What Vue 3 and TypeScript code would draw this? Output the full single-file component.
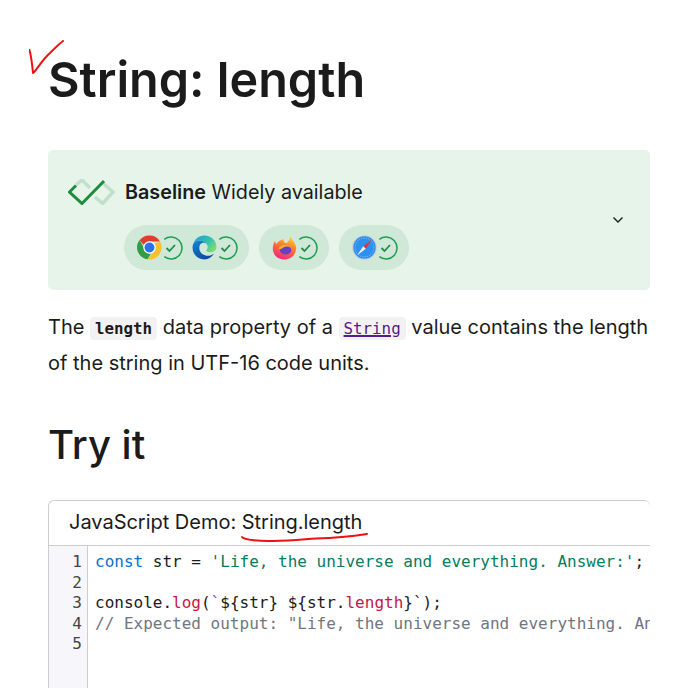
<script setup lang="ts">
const lines = [1, 2, 3, 4, 5]
</script>

<template>
  <main class="page">
    <svg class="mark-check" width="40" height="40" viewBox="0 0 40 40" aria-hidden="true">
      <path d="M0.500 10C1.500 14 3 22 4 33C8 30 12 21 21 13C26 8 30 4 34 1" fill="none" stroke="#ee1111" stroke-width="2" stroke-linecap="round" stroke-linejoin="round" />
    </svg>
    <h1 class="title">String: length</h1>

    <section class="baseline">
      <div class="baseline-main">
        <div class="baseline-head">
          <svg class="logo" width="47" height="26" viewBox="0 0 47 26" aria-hidden="true">
            <path d="M8 6L14 1L22 9" fill="none" stroke="#c2dfcc" stroke-width="3.500" />
            <path d="M34.700 4L45 13L34.700 24.500L27 18" fill="none" stroke="#c2dfcc" stroke-width="3.500" />
            <path d="M8 6.500L1.500 13L14 24.500L36 2" fill="none" stroke="#1e8b3f" stroke-width="3" />
          </svg>
          <span class="baseline-text"><strong>Baseline</strong> Widely available</span>
        </div>
        <div class="pills">
          <div class="pill">
            <svg class="browser" width="25" height="25" viewBox="0 0 48 48" aria-hidden="true">
              <path d="M24 1A23 23 0 0 1 44 12.500H24A11.500 11.500 0 0 0 13.500 19.500L5 10A23 23 0 0 1 24 1Z" fill="#e33b2e" />
              <path d="M5 9.500L14.500 27A11 11 0 0 0 27 35L20.500 46.500A23 23 0 0 1 5 9.500Z" fill="#2f9e44" />
              <path d="M44.500 13A23 23 0 0 1 20 46.500L30.500 33A11 11 0 0 0 33 16.500L44.500 13Z" fill="#fbc02d" />
              <circle cx="24" cy="24" r="12" fill="#fff" />
              <circle cx="24" cy="24" r="9.500" fill="#2b73e8" />
            </svg>
            <svg class="yes" width="24" height="24" viewBox="0 0 24 24" aria-hidden="true">
              <path d="M5.300 3.300A11 11 0 1 1 5.300 20.700" fill="none" stroke="#1f9d50" stroke-width="1.500" />
              <path d="M7.500 12L10.500 15L16 9" fill="none" stroke="#1f8f4a" stroke-width="1.800" />
            </svg>
            <svg class="browser second" width="25" height="25" viewBox="0 0 48 48" aria-hidden="true">
              <defs>
                <linearGradient id="edgeTop" x1="0" y1="0" x2="1" y2="0.700">
                  <stop offset="0" stop-color="#1b9fd8" />
                  <stop offset="0.600" stop-color="#35c1b0" />
                  <stop offset="1" stop-color="#7fdc6e" />
                </linearGradient>
                <linearGradient id="edgeLow" x1="0" y1="0" x2="0.700" y2="1">
                  <stop offset="0" stop-color="#1584dc" />
                  <stop offset="1" stop-color="#0c4a96" />
                </linearGradient>
              </defs>
              <path d="M3 16C7 5 16 1 24 1C37 1 47 11 47 23C47 30 41 33 35 33C29 33 27 31 28 29C31 26 31 20 27 16C20 9 8 9 3 16Z" fill="url(#edgeTop)" />
              <path d="M3 16C8 9 20 9 27 16C22 13 14 15 14 25C14 34 22 40 31 40C35 40 39 38 42 36C38 43 31 47 24 47C11 47 1 37 1 24C1 21 2 18 3 16Z" fill="url(#edgeLow)" />
            </svg>
            <svg class="yes" width="24" height="24" viewBox="0 0 24 24" aria-hidden="true">
              <path d="M5.300 3.300A11 11 0 1 1 5.300 20.700" fill="none" stroke="#1f9d50" stroke-width="1.500" />
              <path d="M7.500 12L10.500 15L16 9" fill="none" stroke="#1f8f4a" stroke-width="1.800" />
            </svg>
          </div>
          <div class="pill">
            <svg class="browser" width="25" height="25" viewBox="0 0 48 48" aria-hidden="true">
              <defs>
                <linearGradient id="fox" x1="0.700" y1="0" x2="0.300" y2="1">
                  <stop offset="0" stop-color="#ffd43a" />
                  <stop offset="0.450" stop-color="#ff7a2a" />
                  <stop offset="1" stop-color="#f0218a" />
                </linearGradient>
              </defs>
              <path d="M35 1C36 8 44 12 46 22C48 36 38 47 24 47C10 47 1 37 1.500 25C2 20 3 15 6 11C6 14 7 16 9 17C12 11 18 9 23 8C21 12 24 15 28 16C31 12 36 9 35 1Z" fill="url(#fox)" />
              <ellipse cx="26" cy="29" rx="11" ry="8.500" fill="#6a3fc4" />
              <path d="M12 26C16 19 30 16 38 25C33 21 24 21 19 26C17 28 14 28 12 26Z" fill="#ffb02e" />
            </svg>
            <svg class="yes" width="24" height="24" viewBox="0 0 24 24" aria-hidden="true">
              <path d="M5.300 3.300A11 11 0 1 1 5.300 20.700" fill="none" stroke="#1f9d50" stroke-width="1.500" />
              <path d="M7.500 12L10.500 15L16 9" fill="none" stroke="#1f8f4a" stroke-width="1.800" />
            </svg>
          </div>
          <div class="pill">
            <svg class="browser" width="25" height="25" viewBox="0 0 48 48" aria-hidden="true">
              <circle cx="24" cy="24" r="23.500" fill="#c9cdd0" />
              <circle cx="24" cy="24" r="21.500" fill="#2c8ff2" />
              <circle cx="24" cy="24" r="18" fill="none" stroke="#7ec0fa" stroke-width="2" stroke-dasharray="1.500 2" />
              <path d="M38 9L26.500 26.500L21.500 21.500Z" fill="#e5342e" />
              <path d="M10 39L21.500 21.500L26.500 26.500Z" fill="#f2f4f6" />
            </svg>
            <svg class="yes" width="24" height="24" viewBox="0 0 24 24" aria-hidden="true">
              <path d="M5.300 3.300A11 11 0 1 1 5.300 20.700" fill="none" stroke="#1f9d50" stroke-width="1.500" />
              <path d="M7.500 12L10.500 15L16 9" fill="none" stroke="#1f8f4a" stroke-width="1.800" />
            </svg>
          </div>
        </div>
      </div>
      <svg class="chevron" width="12" height="8" viewBox="0 0 12 8" aria-hidden="true">
        <path d="M1.500 1.500L6 6L10.500 1.500" fill="none" stroke="#1b1b1b" stroke-width="1.400" />
      </svg>
    </section>

    <p class="intro">
      The <code class="chip strong">length</code> data property of a <a class="chip link" href="#">String</a> value contains the length of the string in UTF-16 code units.
    </p>

    <h2 class="sub">Try it</h2>

    <section class="demo">
      <header class="demo-head">
        <span class="demo-title">JavaScript Demo: String.length</span>
        <svg class="mark-line" width="130" height="12" viewBox="0 0 130 12" aria-hidden="true">
          <path d="M1 4C3 7 20 8.500 32 8C50 7.500 60 6.500 75 5.500C95 5 110 3.500 126 1" fill="none" stroke="#ee1111" stroke-width="2" stroke-linecap="round" />
        </svg>
      </header>
      <div class="editor">
        <div class="gutter">
          <div v-for="n in lines" :key="n" class="num">{{ n }}</div>
        </div>
        <pre class="code"><span class="kw">const</span> str = <span class="str">'Life, the universe and everything. Answer:'</span>;

console.<span class="prop">log</span>(<span class="tick">`</span>${str} ${str.<span class="prop">length</span>}`);
<span class="cmt">// Expected output: "Life, the universe and everything. Answer: 42"</span></pre>
      </div>
    </section>
  </main>
</template>

<style>
html,
body {
  margin: 0;
  background: #fff;
  overflow: hidden;
}
</style>

<style scoped>
.page {
  position: relative;
  box-sizing: border-box;
  width: 677px;
  height: 688px;
  padding: 0 27px 0 48px;
  overflow: hidden;
  font-family: Inter, "Noto Sans", sans-serif;
  color: #1b1b1b;
}
.mark-check {
  position: absolute;
  left: 29px;
  top: 40px;
}
.title {
  margin: 0;
  padding-top: 50px;
  font-size: 48.500px;
  line-height: 60px;
  font-weight: 600;
}
.baseline {
  display: flex;
  align-items: center;
  justify-content: space-between;
  box-sizing: border-box;
  height: 140px;
  margin-top: 40px;
  padding: 0 26px 0 20px;
  border-radius: 5px;
  background: #e6f4ea;
}
.baseline-main {
  display: flex;
  flex-direction: column;
  align-self: flex-start;
  gap: 20px;
  padding-top: 29px;
}
.baseline-head {
  display: flex;
  align-items: center;
  gap: 10px;
  height: 26px;
}
.baseline-text {
  font-size: 19.750px;
  line-height: 26px;
}
.baseline-text strong {
  font-weight: 600;
}
.pills {
  display: flex;
  gap: 10px;
  margin-left: 56px;
}
.pill {
  display: flex;
  align-items: center;
  height: 45px;
  padding: 0 11px 0 13px;
  border-radius: 23px;
  background: #cfe8d7;
}
.browser {
  flex: none;
}
.second {
  margin-left: 9px;
}
.yes {
  flex: none;
  margin-left: -3px;
}
.intro {
  margin: 20px 0 0;
  font-size: 20px;
  line-height: 34px;
}
.chip {
  padding: 2px 5px;
  border-radius: 4px;
  background: #f2f2f2;
  font-family: "DejaVu Sans Mono", monospace;
  font-size: 15.800px;
}
.strong {
  font-weight: 700;
}
.link {
  color: #551a8b;
  text-decoration: underline;
  text-decoration-thickness: 2px;
}
.sub {
  margin: 40px 0 0;
  font-size: 40px;
  line-height: 50px;
  font-weight: 500;
}
.demo {
  box-sizing: border-box;
  width: 602px;
  height: 220px;
  margin-top: 30px;
  border: 1px solid #cdcdcd;
  border-right: 0;
  border-bottom: 0;
  border-radius: 6px 6px 0 0;
  overflow: hidden;
}
.demo-head {
  position: relative;
  box-sizing: border-box;
  height: 45px;
  padding: 8px 0 0 20px;
  border-bottom: 1px solid #cdcdcd;
}
.demo-title {
  font-size: 20px;
  line-height: 26px;
  letter-spacing: -0.020px;
}
.mark-line {
  position: absolute;
  left: 192px;
  top: 32px;
}
.editor {
  display: flex;
  height: 100%;
  font-family: "DejaVu Sans Mono", monospace;
  font-size: 16px;
  line-height: 20.600px;
}
.gutter {
  flex: none;
  box-sizing: border-box;
  width: 39px;
  padding: 6px 5px 0 0;
  background: #f6f6fb;
  border-right: 1px solid #cdcdcd;
  text-align: right;
  color: #444;
}
.code {
  margin: 0;
  padding: 6px 0 0 7px;
  font: inherit;
  color: #1b1b1b;
  white-space: pre;
}
.kw {
  color: #0b6fc8;
}
.str {
  color: #067d5b;
}
.prop {
  color: #c8144b;
}
.tick {
  color: #7a3fc8;
}
.cmt {
  color: #6f7680;
}
</style>
